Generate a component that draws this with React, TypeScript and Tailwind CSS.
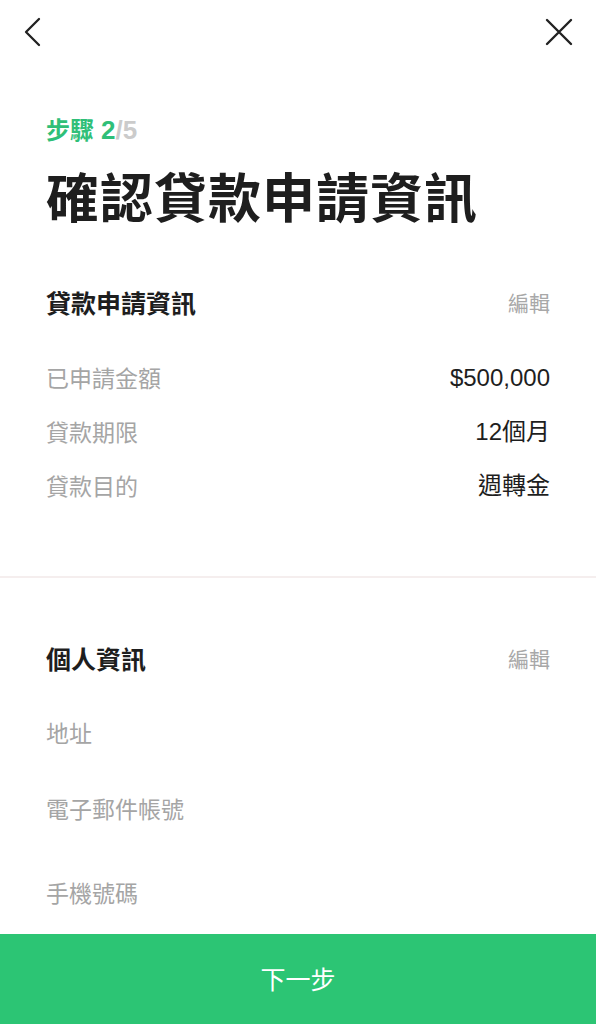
import React from "react";

const font = { fontFamily: '"Noto Sans CJK TC", "Noto Sans", sans-serif' };
const latin = { fontFamily: '"Liberation Sans", "Noto Sans CJK TC", sans-serif' };

function Row({ label, value }: { label: string; value?: string }) {
  return (
    <div className="flex items-center justify-between leading-[33px]">
      <span className="text-[23px] text-[#a5a5a5]">{label}</span>
      {value && (
        <span className="text-[24px] text-[#1e1e1e]" style={latin}>
          {value}
        </span>
      )}
    </div>
  );
}

function SectionHead({ title }: { title: string }) {
  return (
    <div className="flex items-center justify-between leading-[36px]">
      <span className="text-[25px] font-bold text-[#1e1e1e]">{title}</span>
      <span className="text-[21px] text-[#a8a8a8]">編輯</span>
    </div>
  );
}

export default function App() {
  return (
    <div className="relative h-[1024px] w-[596px] overflow-hidden bg-white" style={font}>
      <div className="flex h-[64px] items-center justify-between px-[22px]">
        <svg width="22" height="32" viewBox="0 0 22 32" fill="none">
          <path d="M17 3 4 16l13 13" stroke="#222" strokeWidth="2.3" strokeLinecap="round" strokeLinejoin="round" />
        </svg>
        <svg width="30" height="30" viewBox="0 0 30 30" fill="none">
          <path d="M3 3l24 24M27 3 3 27" stroke="#222" strokeWidth="2.4" strokeLinecap="round" />
        </svg>
      </div>

      <div className="px-[46px] pt-[50px]">
        <div className="flex items-baseline text-[24px] font-bold leading-[30px]">
          <span className="text-[#2fbf78]">步驟</span>
          <span className="ml-[7px] text-[26px] text-[#2fbf78]" style={latin}>2</span>
          <span className="text-[26px] text-[#cbcbcb]" style={latin}>/5</span>
        </div>
        <h1 className="mt-[20px] text-[53px] font-bold leading-[60px] tracking-[1px] text-[#1e1e1e]">
          確認貸款申請資訊
        </h1>

        <div className="mt-[59px]">
          <SectionHead title="貸款申請資訊" />
          <div className="mt-[41px] flex flex-col gap-[21px]">
            <Row label="已申請金額" value="$500,000" />
            <Row label="貸款期限" value="12個月" />
            <Row label="貸款目的" value="週轉金" />
          </div>
        </div>
      </div>

      <div className="mt-[74px] h-[2px] bg-[#f5eeee]" />

      <div className="px-[46px] pt-[62px]">
        <SectionHead title="個人資訊" />
        <div className="mt-[40px] flex flex-col">
          <Row label="地址" />
          <div className="mt-[43px]">
            <Row label="電子郵件帳號" />
          </div>
          <div className="mt-[51px]">
            <Row label="手機號碼" />
          </div>
        </div>
      </div>

      <button className="absolute bottom-0 left-0 flex h-[90px] w-full items-center justify-center bg-[#2cc574] text-[25px] text-white">
        下一步
      </button>
    </div>
  );
}
